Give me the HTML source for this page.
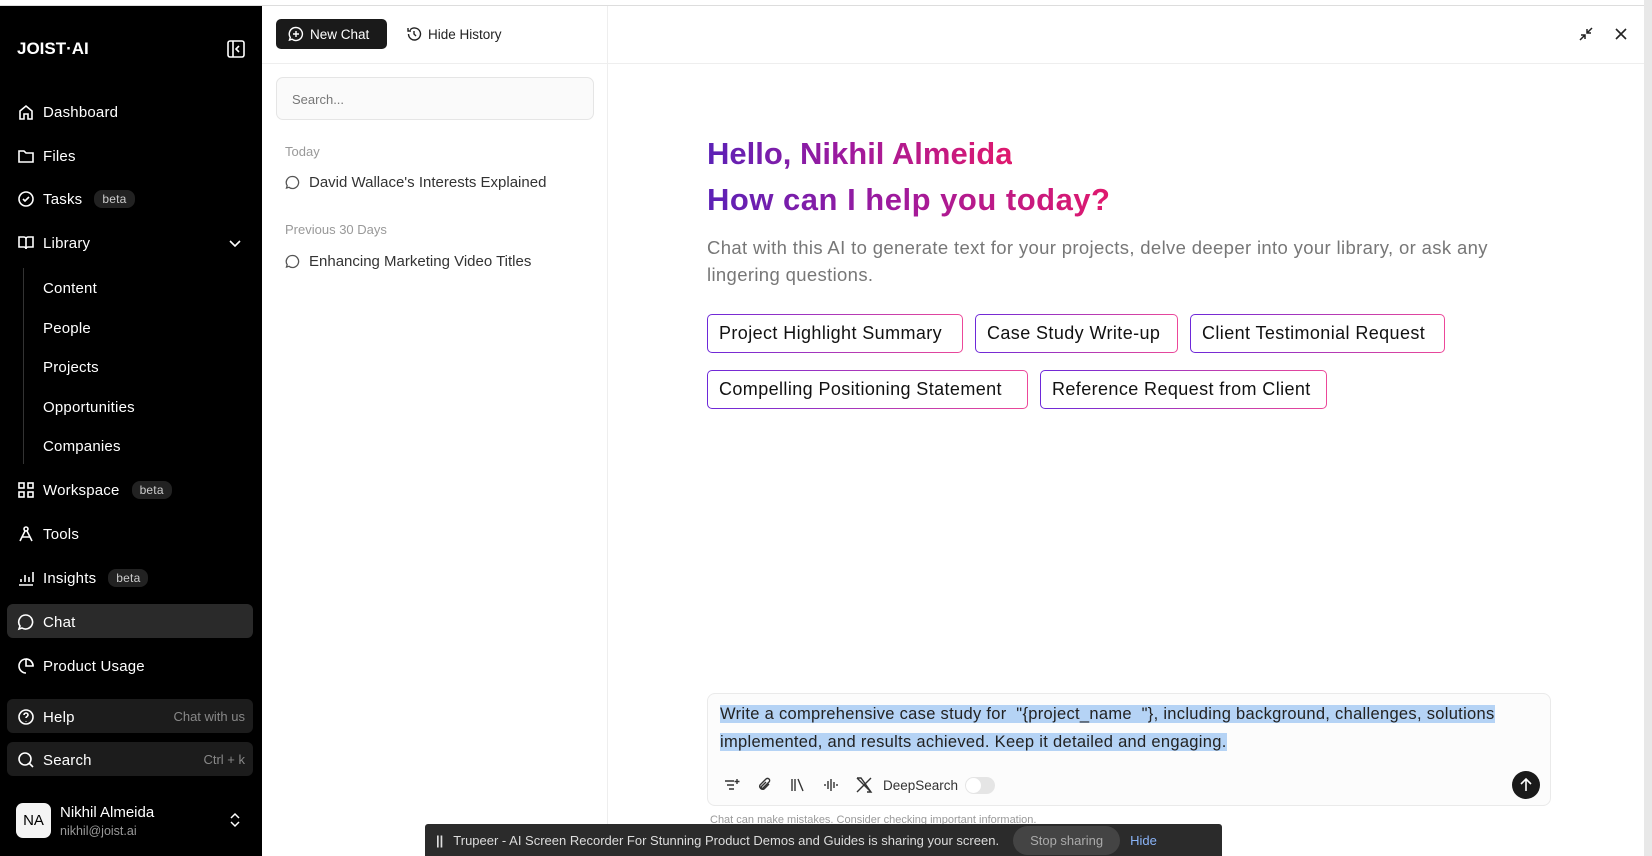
<!DOCTYPE html>
<html><head><meta charset="utf-8"><style>
*{box-sizing:border-box;margin:0;padding:0}
body{width:1652px;height:856px;overflow:hidden;background:#fff;font-family:"Liberation Sans",sans-serif;position:relative}
.sb{position:absolute;left:0;top:6px;width:262px;height:850px;background:#000;color:#fff}
.top{position:absolute;left:0;top:0;width:1652px;height:6px;background:#fff;border-bottom:1px solid #ddd}
.ni{position:absolute;left:17px;font-size:15px;color:#fff;display:flex;align-items:center;gap:8px;letter-spacing:0.2px}
.ni svg{width:18px;height:18px;stroke:#fff;fill:none;stroke-width:1.6}
.sub{position:absolute;left:43px;font-size:15px;color:#fff;letter-spacing:0.2px}
.beta{background:#222;color:#ccc;font-size:12px;border-radius:8px;padding:2px 8px;margin-left:4px}
.box{position:absolute;left:7px;width:246px;height:34px;border-radius:6px;background:#1c1c1c}
.hp{position:absolute;left:262px;top:6px;width:346px;height:850px;border-right:1px solid #eee}
.hdr{position:absolute;left:262px;top:63px;width:1382px;height:1px;background:#eee}
.gr{background:linear-gradient(90deg,#5b21b6,#9d1a9e 45%,#e0196d);-webkit-background-clip:text;background-clip:text;color:transparent;font-size:31px;font-weight:bold;position:absolute;left:707px}
.chip{position:absolute;height:39px;border:1.5px solid transparent;border-radius:5px;font-size:18px;letter-spacing:0.4px;color:#111;display:flex;align-items:center;padding:0 11px;background:linear-gradient(#fff,#fff) padding-box,linear-gradient(90deg,#6d28d9,#ec4899) border-box}
.hl{background:#b5d3f5}
</style></head><body>
<div class="top"></div>
<div style="position:absolute;left:1644px;top:0;width:8px;height:856px;background:#e8e8e8"></div>
<div class="sb">
<div style="position:absolute;left:17px;top:33px;font-size:17px;font-weight:bold;letter-spacing:0">JOIST·AI</div>
<svg style="position:absolute;left:227px;top:34px" width="18" height="18" viewBox="0 0 18 18" fill="none" stroke="#fff" stroke-width="1.6"><rect x="1" y="1" width="16" height="16" rx="2"/><path d="M6 1v16M12 6l-3 3 3 3"/></svg>
<div class="ni" style="top:97px"><svg viewBox="0 0 18 18"><path d="M3 8l6-5 6 5v8H11v-5H7v5H3z"/></svg>Dashboard</div>
<div class="ni" style="top:141px"><svg viewBox="0 0 18 18"><path d="M2 4h5l2 2h7v9H2z"/></svg>Files</div>
<div class="ni" style="top:184px"><svg viewBox="0 0 18 18"><circle cx="9" cy="9" r="7"/><path d="M6 9l2 2 4-4"/></svg>Tasks<span class="beta">beta</span></div>
<div class="ni" style="top:228px"><svg viewBox="0 0 18 18"><path d="M2 3h5a2 2 0 012 2v10a2 2 0 00-2-2H2zM16 3h-5a2 2 0 00-2 2v10a2 2 0 012-2h5z"/></svg>Library</div>
<svg style="position:absolute;left:229px;top:234px" width="12" height="8" fill="none" stroke="#fff" stroke-width="1.6"><path d="M1 1l5 5 5-5"/></svg>
<div style="position:absolute;left:23px;top:262px;width:1px;height:196px;background:#333"></div>
<div class="sub" style="top:274px">Content</div>
<div class="sub" style="top:314px">People</div>
<div class="sub" style="top:353px">Projects</div>
<div class="sub" style="top:393px">Opportunities</div>
<div class="sub" style="top:432px">Companies</div>
<div class="ni" style="top:475px"><svg viewBox="0 0 18 18"><rect x="2" y="2" width="5" height="5"/><rect x="11" y="2" width="5" height="5"/><rect x="2" y="11" width="5" height="5"/><rect x="11" y="11" width="5" height="5"/></svg>Workspace<span class="beta">beta</span></div>
<div class="ni" style="top:519px"><svg viewBox="0 0 18 18"><circle cx="9" cy="4" r="2"/><path d="M8 6L3 16M10 6l5 10M5 12h8"/></svg>Tools</div>
<div class="ni" style="top:563px"><svg viewBox="0 0 18 18"><path d="M2 16h14M4 13v-3M8 13V6M12 13V8M16 13V3"/></svg>Insights<span class="beta">beta</span></div>
<div class="box" style="top:598px;background:#2a2a2a"></div>
<div class="ni" style="top:607px"><svg viewBox="0 0 18 18"><path d="M9 2a7 7 0 11-4 13l-3 1 1-3A7 7 0 019 2z"/></svg>Chat</div>
<div class="ni" style="top:651px"><svg viewBox="0 0 18 18"><path d="M9 2v7h7A7 7 0 109 16"/><path d="M9 2a7 7 0 017 7"/></svg>Product Usage</div>
<div class="box" style="top:693px"></div>
<div class="ni" style="top:702px"><svg viewBox="0 0 18 18"><circle cx="9" cy="9" r="7"/><path d="M7 7a2 2 0 114 0c0 1.5-2 1.5-2 3M9 13v.5"/></svg>Help</div>
<div style="position:absolute;right:17px;top:703px;font-size:13px;color:#888">Chat with us</div>
<div class="box" style="top:736px"></div>
<div class="ni" style="top:745px"><svg viewBox="0 0 18 18"><circle cx="8" cy="8" r="6"/><path d="M12.5 12.5L16 16"/></svg>Search</div>
<div style="position:absolute;right:17px;top:746px;font-size:13px;color:#888">Ctrl + k</div>
<div style="position:absolute;left:16px;top:797px;width:35px;height:35px;background:#f4f4f4;border-radius:7px;color:#000;font-size:15px;display:flex;align-items:center;justify-content:center">NA</div>
<div style="position:absolute;left:60px;top:798px;font-size:15px">Nikhil Almeida</div>
<div style="position:absolute;left:60px;top:818px;font-size:12.5px;color:#999">nikhil@joist.ai</div>
<svg style="position:absolute;left:230px;top:806px" width="10" height="16" fill="none" stroke="#fff" stroke-width="1.5"><path d="M1 6l4-4 4 4M1 10l4 4 4-4"/></svg>
</div>
<div class="hp"></div>
<div class="hdr"></div>
<div style="position:absolute;left:276px;top:19px;width:111px;height:30px;background:#1a1a1a;border-radius:5px;color:#fff;font-size:13.5px;display:flex;align-items:center;padding-left:12px;gap:6px"><svg width="16" height="16" fill="none" stroke="#fff" stroke-width="1.4"><path d="M8 1.5a6.5 6.5 0 11-4 11.7L1.5 14l.8-2.5A6.5 6.5 0 018 1.5zM8 5v6M5 8h6"/></svg>New Chat</div>
<div style="position:absolute;left:406px;top:26px;font-size:13.5px;color:#222;display:flex;align-items:center;gap:6px"><svg width="16" height="16" fill="none" stroke="#222" stroke-width="1.4"><path d="M2.5 8a6 6 0 101.7-4.2M2 2v3h3M8 5v3l2 2"/></svg>Hide History</div>
<svg style="position:absolute;left:1578px;top:26px" width="16" height="16" fill="none" stroke="#222" stroke-width="1.5"><path d="M2 14l5-5M3 9h4v4M14 2L9 7M13 7H9V3"/></svg>
<svg style="position:absolute;left:1614px;top:27px" width="14" height="14" fill="none" stroke="#222" stroke-width="1.6"><path d="M2 2l10 10M12 2L2 12"/></svg>
<div style="position:absolute;left:276px;top:77px;width:318px;height:43px;border:1px solid #e5e5e5;border-radius:7px;background:#fafafa;font-size:13px;color:#777;padding:14px 15px">Search...</div>
<div style="position:absolute;left:285px;top:144px;font-size:13px;color:#999">Today</div>
<div style="position:absolute;left:285px;top:174px;font-size:15px;color:#333;display:flex;align-items:center;gap:9px"><svg width="15" height="15" fill="none" stroke="#555" stroke-width="1.3"><path d="M7.5 1.5a6 6 0 11-3.5 10.8L1.5 13l.7-2.3A6 6 0 017.5 1.5z"/></svg>David Wallace's Interests Explained</div>
<div style="position:absolute;left:285px;top:222px;font-size:13px;color:#999">Previous 30 Days</div>
<div style="position:absolute;left:285px;top:253px;font-size:15px;color:#333;display:flex;align-items:center;gap:9px"><svg width="15" height="15" fill="none" stroke="#555" stroke-width="1.3"><path d="M7.5 1.5a6 6 0 11-3.5 10.8L1.5 13l.7-2.3A6 6 0 017.5 1.5z"/></svg>Enhancing Marketing Video Titles</div>
<div class="gr" style="top:136px">Hello, Nikhil Almeida</div>
<div class="gr" style="top:182px;letter-spacing:0.5px">How can I help you today?</div>
<div style="position:absolute;left:707px;top:234px;width:820px;font-size:18.5px;line-height:27px;color:#777;letter-spacing:0.35px">Chat with this AI to generate text for your projects, delve deeper into your library, or ask any lingering questions.</div>
<div class="chip" style="left:707px;top:314px;width:256px">Project Highlight Summary</div>
<div class="chip" style="left:975px;top:314px;width:203px">Case Study Write-up</div>
<div class="chip" style="left:1190px;top:314px;width:255px">Client Testimonial Request</div>
<div class="chip" style="left:707px;top:370px;width:321px">Compelling Positioning Statement</div>
<div class="chip" style="left:1040px;top:370px;width:287px">Reference Request from Client</div>
<div style="position:absolute;left:707px;top:693px;width:844px;height:113px;border:1px solid #eaeaea;border-radius:8px;background:#fcfcfc"></div>
<div style="position:absolute;left:720px;top:700px;width:830px;font-size:16.5px;line-height:28px;color:#222;letter-spacing:0.3px"><span class="hl">Write a comprehensive case study for &nbsp;"{project_name &nbsp;"}, including background, challenges, solutions</span><br><span class="hl">implemented, and results achieved. Keep it detailed and engaging.</span></div>
<div style="position:absolute;left:723px;top:776px;display:flex;align-items:center;gap:15px;font-size:13.5px;color:#333">
<svg width="18" height="18" fill="none" stroke="#333" stroke-width="1.4"><path d="M2 5h9M4 9h7M6 13h5M14 3v5M11.5 5.5h5"/></svg>
<svg width="18" height="18" fill="none" stroke="#333" stroke-width="1.4"><path d="M13 8l-5 5a3 3 0 01-4-4l6-6a2 2 0 013 3l-6 6a1 1 0 01-1.5-1.5L10 6"/></svg>
<svg width="18" height="18" fill="none" stroke="#333" stroke-width="1.4"><path d="M3 3v12M6 3v12M9 3l5 12"/></svg>
<svg width="18" height="18" fill="none" stroke="#333" stroke-width="1.4"><path d="M3 8v2M6 5v8M9 3v12M12 6v6M15 8v2"/></svg>
<svg width="18" height="18" fill="none" stroke="#333" stroke-width="1.4"><path d="M2 2l14 14M16 2L2 16M2 2h4l10 14h-4"/></svg>
<span style="margin-left:-5px">DeepSearch</span>
<span style="width:30px;height:17px;border-radius:9px;background:#e5e5e5;position:relative;margin-left:-8px"><span style="position:absolute;left:1px;top:1px;width:15px;height:15px;border-radius:50%;background:#fff"></span></span>
</div>
<div style="position:absolute;left:1512px;top:771px;width:28px;height:28px;border-radius:50%;background:#1a1a1a"><svg width="28" height="28" fill="none" stroke="#fff" stroke-width="1.6"><path d="M14 20V8M9 13l5-5 5 5"/></svg></div>
<div style="position:absolute;left:710px;top:814px;font-size:11px;color:#999">Chat can make mistakes. Consider checking important information.</div>
<div style="position:absolute;left:425px;top:824px;width:797px;height:32px;background:#2b2b2b;border-radius:3px 3px 0 0;color:#ddd;font-size:13px;display:flex;align-items:center;padding-left:11px;gap:10px">
<span style="font-weight:bold">||</span><span>Trupeer - AI Screen Recorder For Stunning Product Demos and Guides is sharing your screen.</span>
<span style="background:#444;color:#aaa;border-radius:16px;padding:7px 17px;margin-left:4px">Stop sharing</span><span style="color:#8ab4f8">Hide</span></div>
</body></html>
